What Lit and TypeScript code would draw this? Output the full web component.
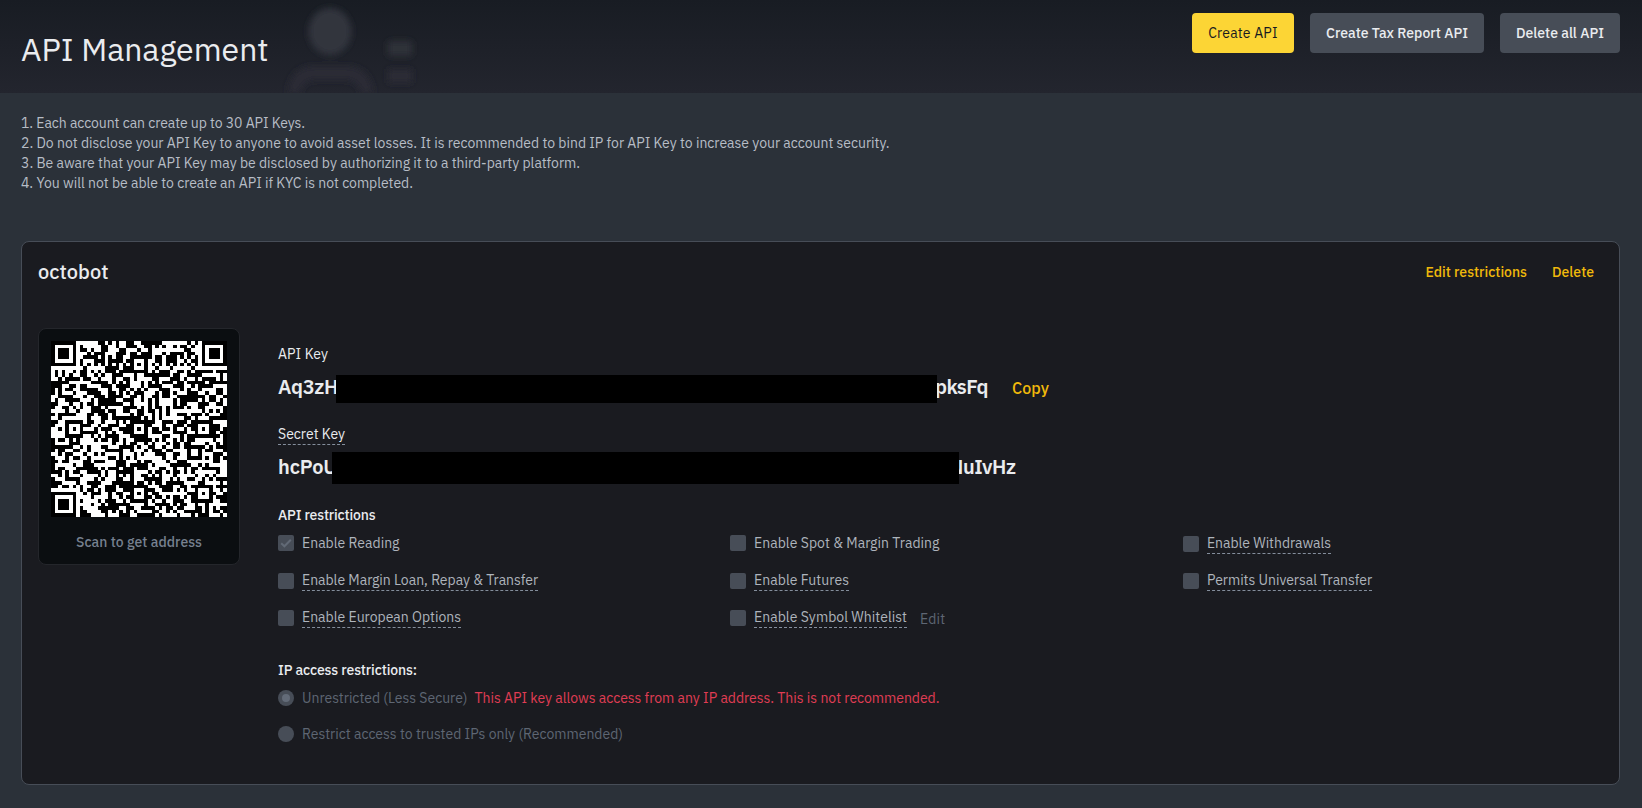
import { LitElement, html, svg, css } from "lit";
import { customElement, property } from "lit/decorators.js";

/** A run of text tracked so that it fills a given width. */
@customElement("fit-text")
class FitText extends LitElement {
  @property({ type: Number }) w = 0;
  @property() text = "";
  static styles = css`
    :host { display: inline-block; white-space: nowrap; flex: none; }
    .t { display: inline-block; }
  `;
  updated() {
    const el = this.renderRoot.querySelector(".t") as HTMLElement;
    el.style.letterSpacing = "0px";
    const natural = el.getBoundingClientRect().width;
    el.style.letterSpacing = (this.w - natural) / this.text.length + "px";
  }
  render() {
    return html`<span class="t">${this.text}</span>`;
  }
}

const t = (text: string, w: number) => html`<fit-text .text=${text} .w=${w}></fit-text>`;

/** 49 x 49 code: finder, alignment and timing patterns over a data field. */
@customElement("qr-code")
class QrCode extends LitElement {
  static styles = css`
    :host { display: block; width: 176px; height: 176px; }
    .code { display: block; width: 176px; height: 176px; background: #000; }
  `;
  private lightPath() {
    const n = 49;
    const rnd = (x: number, y: number) => {
      let h = (x * 374761393 + y * 668265263 + 977) | 0;
      h = Math.imul(h ^ (h >>> 13), 1274126177);
      return ((h ^ (h >>> 16)) >>> 0) % 100;
    };
    const isLight = (x: number, y: number): boolean => {
      for (const [fx, fy] of [[3, 3], [n - 4, 3], [3, n - 4]]) {
        const d = Math.max(Math.abs(x - fx), Math.abs(y - fy));
        if (d <= 4) return d === 2 || d === 4;
      }
      for (const ax of [6, 24, 42])
        for (const ay of [6, 24, 42]) {
          if ((ax === 6 && ay !== 24) || (ay === 6 && ax !== 24)) continue;
          const d = Math.max(Math.abs(x - ax), Math.abs(y - ay));
          if (d <= 2) return d === 1;
        }
      if (x === 6 || y === 6) return (x + y) % 2 === 1;
      return rnd(x, y) < 51;
    };
    let d = "";
    for (let y = 0; y < n; y++) {
      let x = 0;
      while (x < n) {
        if (!isLight(x, y)) { x++; continue; }
        const start = x;
        while (x < n && isLight(x, y)) x++;
        d += `M${start} ${y}h${x - start}v1h${start - x}z`;
      }
    }
    return d;
  }
  render() {
    return html`<svg class="code" viewBox="0 0 49 49" shape-rendering="crispEdges">
      ${svg`<path fill="#fff" d=${this.lightPath()} />`}
    </svg>`;
  }
}

interface Permission { label: string; w: number; dashed?: boolean; checked?: boolean; edit?: boolean; }

const permissions: Permission[] = [
  { label: "Enable Reading", w: 97.5, checked: true },
  { label: "Enable Spot & Margin Trading", w: 185.5 },
  { label: "Enable Withdrawals", w: 124, dashed: true },
  { label: "Enable Margin Loan, Repay & Transfer", w: 236, dashed: true },
  { label: "Enable Futures", w: 95, dashed: true },
  { label: "Permits Universal Transfer", w: 165, dashed: true },
  { label: "Enable European Options", w: 159, dashed: true },
  { label: "Enable Symbol Whitelist", w: 153, dashed: true, edit: true },
];

@customElement("app-root")
class AppRoot extends LitElement {
  static styles = css`
    :host {
      display: flex; flex-direction: column; box-sizing: border-box;
      width: 100%; height: 808px; overflow: hidden; background: #2b3139;
      font-family: "IBM Plex Sans", Roboto, "Liberation Sans", sans-serif;
      font-size: 14px; line-height: 20px; color: #b7bdc6;
    }
    * { box-sizing: border-box; }
    .header {
      height: 93px; flex: none; display: flex; align-items: flex-start; overflow: hidden;
      padding: 0 22px 0 21px; background: linear-gradient(#181c23, #23252e);
    }
    .title { margin: 0; padding-top: 27px; font-size: 32px; line-height: 44px; font-weight: 400; color: #eaecef; }
    .watermark { width: 150px; height: 93px; margin-left: 11px; flex: none; }
    .actions { margin-left: auto; padding-top: 13px; display: flex; gap: 16px; }
    .btn {
      height: 40px; border: 0; border-radius: 4px; padding: 0; background: #474d57; color: #eaecef;
      font: 500 14px/20px "IBM Plex Sans", Roboto, sans-serif;
      display: flex; align-items: center; justify-content: center;
    }
    .create { width: 102px; background: #fcd535; color: #181a20; font-weight: 400; }
    .tax { width: 174px; }
    .all { width: 120px; }
    .notes { list-style: none; margin: 0; padding: 20px 21px 0; height: 148px; flex: none; }
    .notes li { height: 20px; display: flex; }
    .card {
      margin: 0 22px 0 21px; height: 544px; flex: none; border: 1px solid #474d57; border-radius: 8px;
      background: #1a1b20; padding: 0 25px 0 16px;
    }
    .card-head { height: 60px; display: flex; align-items: center; gap: 25px; color: #f0b90b; font-weight: 500; }
    .name { margin-right: auto; font-size: 20px; color: #eaecef; }
    .body { display: flex; padding-top: 26px; }
    .scan {
      width: 202px; height: 237px; margin-right: 38px; flex: none; border: 1px solid #24262b; border-radius: 8px;
      background: #0b0e11; display: flex; flex-direction: column; align-items: center; padding-top: 12px;
      color: #76808f; font-weight: 500;
    }
    .scan fit-text { margin-top: 15px; }
    .info { flex: 1; padding-top: 16px; }
    .label { display: flex; height: 20px; color: #eaecef; font-weight: 400; }
    .label.tall { height: 21px; }
    .strong { font-weight: 500; }
    .key { display: flex; align-items: center; font-size: 20px; line-height: 26px; font-weight: 600; color: #eaecef; }
    .k1 { height: 28px; margin: 11px 0 21px; }
    .k2 { height: 32px; margin: 7px 0 21px; }
    .bar { background: #000; height: 100%; z-index: 1; flex: none; }
    .b1 { width: 601px; margin: 0 -2px 0 -2px; }
    .b2 { width: 627px; margin: 0 -10px 0 -5px; }
    .k1 fit-text { margin-top: -5px; }
    .k2 fit-text { margin-top: -2px; }
    .k1 .copy { margin: 2px 0 0 24px; font-size: 16px; font-weight: 500; color: #f0b90b; display: flex; }
    .dashed { border-bottom: 1px dashed #848e9c; }
    .perms {
      display: grid; grid-template-columns: 452px 453px 1fr; grid-template-rows: 38px 37px 37px;
      padding-top: 8px;
    }
    .perm { display: flex; align-items: flex-start; color: #aeb4bc; }
    .box { width: 16px; height: 16px; margin: 2px 8px 0 0; border-radius: 2px; background: #474d57; flex: none; }
    .perm.low .box { margin-top: 3px; }
    .perm.up .text { margin-top: -1px; }
    .perm .text { display: flex; height: 21px; }
    .check { display: block; width: 16px; height: 16px; }
    .edit { margin: 1px 0 0 13px; color: #5e6673; display: flex; }
    .ip { margin-top: 15px; }
    .radio { display: flex; align-items: center; height: 20px; color: #5e6673; margin-top: 8px; }
    .radio + .radio { margin-top: 16px; }
    .dot { width: 16px; height: 16px; border-radius: 50%; background: #474d57; margin-right: 8px; flex: none; display: grid; place-items: center; }
    .dot i { width: 8px; height: 8px; border-radius: 50%; background: #636b78; }
    .warn { color: #e03d54; margin-left: 7px; display: flex; }
  `;

  private perm(p: Permission, i: number) {
    return html`<div class="perm ${i === 2 ? "low" : ""} ${i > 2 ? "up" : ""}">
      <span class="box">${p.checked
        ? html`<svg class="check" viewBox="0 0 16 16"><path d="M3.2 8.2 6.4 11.3 12.8 4.8" fill="none" stroke="#626a76" stroke-width="2" /></svg>`
        : ""}</span>
      <span class="text ${p.dashed ? "dashed" : ""}">${t(p.label, p.w)}</span>
      ${p.edit ? html`<span class="edit">${t("Edit", 25.5)}</span>` : ""}
    </div>`;
  }

  render() {
    return html`
      <header class="header">
        <h1 class="title">${t("API Management", 247.5)}</h1>
        <svg class="watermark" viewBox="280 0 150 93">
          <defs>
            <filter id="soft" x="-20%" y="-20%" width="140%" height="140%"><feGaussianBlur stdDeviation="3" /></filter>
          </defs>
          <g filter="url(#soft)">
            <ellipse cx="330" cy="31.500" rx="21.500" ry="23.500" fill="#33363d" />
            <path d="M288 93V89Q292 66 315 66H346Q368 66 373 89V93H361Q357 80 345 80H316Q304 80 300 93Z" fill="#2a2c35" />
            <rect x="388" y="41" width="24" height="15" rx="2" fill="#2d3038" />
            <rect x="388" y="69" width="24" height="14" rx="2" fill="#292b34" />
          </g>
        </svg>
        <div class="actions">
          <button class="btn create">${t("Create API", 69.5)}</button>
          <button class="btn tax">${t("Create Tax Report API", 142)}</button>
          <button class="btn all">${t("Delete all API", 88)}</button>
        </div>
      </header>
      <ul class="notes">
        <li>${t("1. Each account can create up to 30 API Keys.", 284)}</li>
        <li>${t("2. Do not disclose your API Key to anyone to avoid asset losses. It is recommended to bind IP for API Key to increase your account security.", 868.5)}</li>
        <li>${t("3. Be aware that your API Key may be disclosed by authorizing it to a third-party platform.", 559)}</li>
        <li>${t("4. You will not be able to create an API if KYC is not completed.", 392)}</li>
      </ul>
      <section class="card">
        <div class="card-head">
          <span class="name">${t("octobot", 70.5)}</span>
          ${t("Edit restrictions", 101.5)} ${t("Delete", 42)}
        </div>
        <div class="body">
          <div class="scan"><qr-code></qr-code>${t("Scan to get address", 126)}</div>
          <div class="info">
            <div class="label">${t("API Key", 50)}</div>
            <div class="key k1">
              ${t("Aq3zH", 60)}<span class="bar b1"></span>${t("pksFq", 53)}
              <span class="copy">${t("Copy", 37)}</span>
            </div>
            <div class="label tall"><span class="dashed">${t("Secret Key", 67)}</span></div>
            <div class="key k2">
              ${t("hcPoU", 59)}<span class="bar b2"></span>${t("NuIvHz", 66.5)}
            </div>
            <div class="label strong">${t("API restrictions", 97.5)}</div>
            <div class="perms">${permissions.map((p, i) => this.perm(p, i))}</div>
            <div class="label strong ip">${t("IP access restrictions:", 139)}</div>
            <div class="radio"><span class="dot"><i></i></span>${t("Unrestricted (Less Secure)", 165.5)}
              <span class="warn">${t("This API key allows access from any IP address. This is not recommended.", 465)}</span>
            </div>
            <div class="radio"><span class="dot"></span>${t("Restrict access to trusted IPs only (Recommended)", 321)}</div>
          </div>
        </div>
      </section>
    `;
  }
}
